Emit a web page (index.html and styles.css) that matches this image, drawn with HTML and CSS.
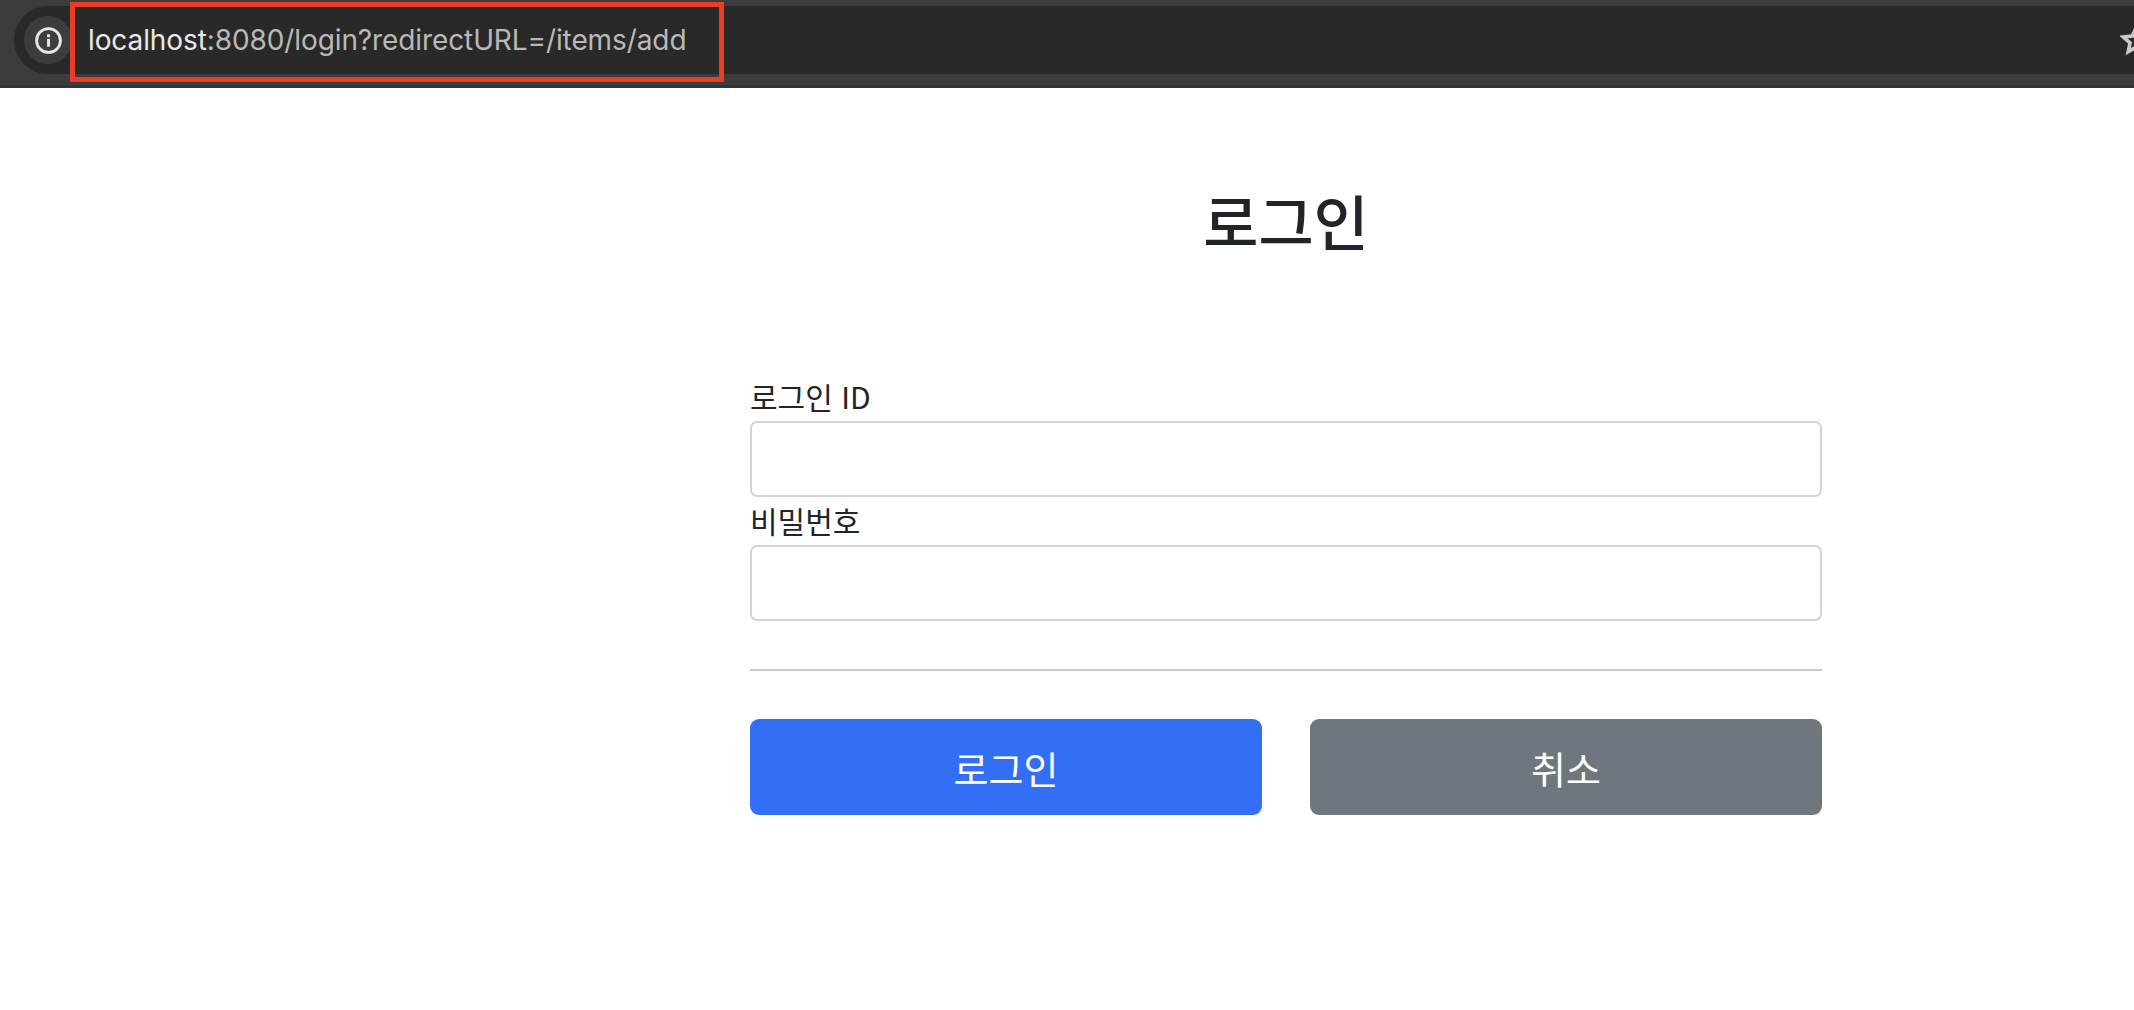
FILE: index.html
```html
<!DOCTYPE html>
<html lang="ko">
<head>
<meta charset="utf-8">
<title>로그인</title>
<link rel="stylesheet" href="styles.css">
</head>
<body>
<header class="toolbar">
  <div class="omnibox">
    <span class="site-info">
      <svg class="info-icon" viewBox="0 0 28 28" aria-hidden="true">
        <circle cx="14" cy="14" r="11.5" fill="none" stroke="#e6e6e6" stroke-width="2.8"/>
        <rect x="12.6" y="12.4" width="2.8" height="7.6" fill="#e6e6e6"/>
        <rect x="12.6" y="8" width="2.8" height="2.8" fill="#e6e6e6"/>
      </svg>
    </span>
    <span class="url"><span class="host">localhost</span>:8080/login?redirectURL=/items/add</span>
    <svg class="star" viewBox="0 0 28 28" aria-hidden="true">
      <path d="M14 3.5l3.2 7.1 7.8.8-5.8 5.2 1.6 7.6L14 20.3l-6.8 3.9 1.6-7.6L3 11.4l7.8-.8z" fill="none" stroke="#c9c9c9" stroke-width="3.2"/>
    </svg>
  </div>
  <div class="highlight"></div>
</header>
<main class="page">
  <div class="container">
    <h2 class="title">로그인</h2>
    <form class="login-form">
      <label class="field-label" for="loginId">로그인 ID</label>
      <input class="field" id="loginId" type="text">
      <label class="field-label" for="password">비밀번호</label>
      <input class="field" id="password" type="password">
      <hr class="rule">
      <div class="actions">
        <button class="btn btn-primary" type="button">로그인</button>
        <button class="btn btn-secondary" type="button">취소</button>
      </div>
    </form>
  </div>
</main>
</body>
</html>
```
FILE: styles.css
```css
html, body {
  margin: 0;
  padding: 0;
  height: 100%;
  overflow: hidden;
  background: #fff;
}
body {
  font-family: "Noto Sans CJK KR", "Inter", sans-serif;
  color: #212529;
}
.toolbar {
  position: relative;
  height: 88px;
  box-sizing: border-box;
  padding: 6px 0 13px;
  background: #3c3c3c;
  border-bottom: 3px solid #353535;
  overflow: hidden;
}
.omnibox {
  display: flex;
  align-items: center;
  height: 68px;
  margin-left: 14px;
  padding-left: 10px;
  background: #292929;
  border-radius: 34px 0 0 34px;
}
.site-info {
  flex: none;
  display: flex;
  align-items: center;
  justify-content: center;
  width: 48px;
  height: 48px;
  border-radius: 50%;
  background: #3d3d3d;
}
.info-icon {
  width: 29px;
  height: 29px;
}
.url {
  margin-left: 16px;
  font-family: "Inter", "Liberation Sans", sans-serif;
  font-size: 28px;
  letter-spacing: -0.1px;
  color: #b9b9b9;
  white-space: nowrap;
}
.host {
  color: #e8e8e8;
}
.star {
  flex: none;
  width: 32px;
  height: 32px;
  margin-left: auto;
  margin-right: -18px;
}
.highlight {
  position: absolute;
  left: 70px;
  top: 2px;
  width: 654px;
  height: 80px;
  box-sizing: border-box;
  border: 5px solid #ea3d23;
}
.page {
  padding-left: 750px;
}
.container {
  width: 1072px;
}
.title {
  height: 123px;
  margin: 0 0 68px;
  padding-top: 96px;
  font-size: 60px;
  font-weight: 500;
  line-height: 1.2;
  text-align: center;
}
.login-form {
  display: flex;
  flex-direction: column;
}
.field-label {
  display: block;
  height: 46px;
  font-size: 30px;
  line-height: 42px;
  color: #212529;
}
.field {
  display: block;
  box-sizing: border-box;
  width: 100%;
  height: 76px;
  padding: 0 20px;
  border: 2px solid #ced4da;
  border-radius: 7px;
  background: #fff;
  font-size: 28px;
  outline: none;
}
.field + .field-label {
  margin-top: 2px;
}
.rule {
  width: 100%;
  height: 2px;
  margin: 48px 0;
  border: 0;
  background: #c6c8ca;
}
.actions {
  display: grid;
  grid-template-columns: 1fr 1fr;
  column-gap: 48px;
}
.btn {
  height: 96px;
  padding: 0;
  border: 0;
  border-radius: 9px;
  color: #fff;
  font-family: inherit;
  font-size: 38px;
}
.btn-primary {
  background: #326ff5;
}
.btn-secondary {
  background: #6f767d;
}
```
